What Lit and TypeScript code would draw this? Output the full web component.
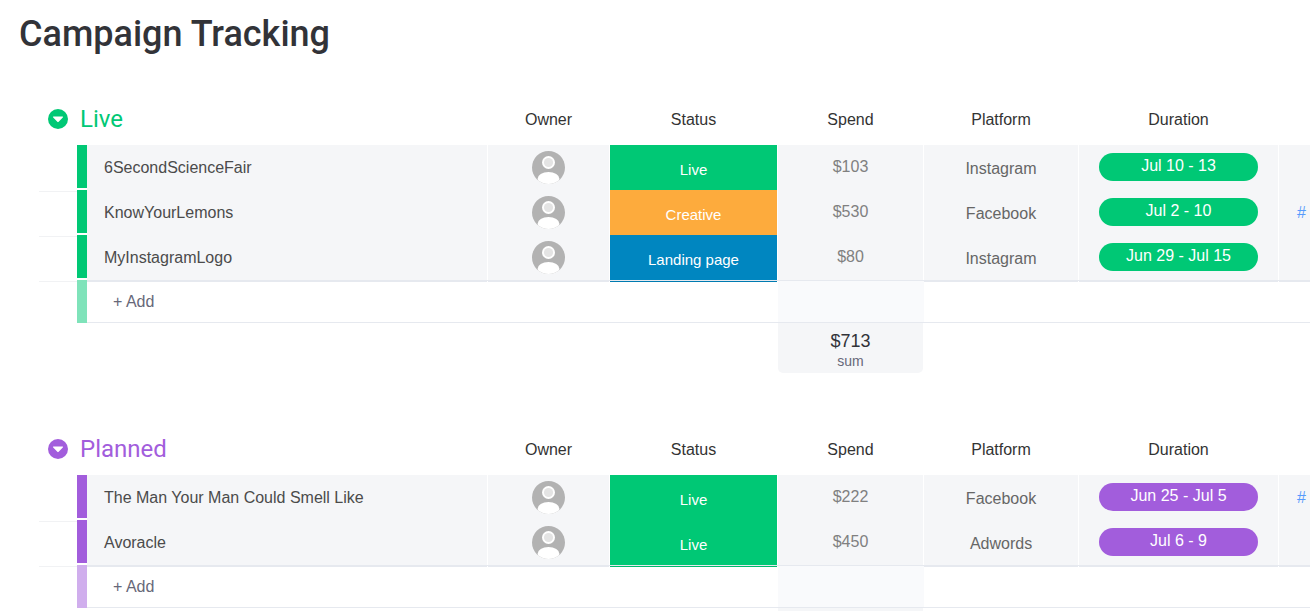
import { LitElement, css, html, svg } from 'lit';
import { customElement } from 'lit/decorators.js';

const GREEN = '#00c875';
const PURPLE = '#a25ddc';

interface Row {
  name: string;
  status: string;
  statusColor: string;
  spend: string;
  platform: string;
  duration: string;
  tag?: boolean;
}

interface Group {
  title: string;
  color: string;
  rows: Row[];
  sum?: string;
}

const groups: Group[] = [
  {
    title: 'Live',
    color: GREEN,
    sum: '$713',
    rows: [
      { name: '6SecondScienceFair', status: 'Live', statusColor: GREEN, spend: '$103', platform: 'Instagram', duration: 'Jul 10 - 13' },
      { name: 'KnowYourLemons', status: 'Creative', statusColor: '#fdab3d', spend: '$530', platform: 'Facebook', duration: 'Jul 2 - 10', tag: true },
      { name: 'MyInstagramLogo', status: 'Landing page', statusColor: '#0086c0', spend: '$80', platform: 'Instagram', duration: 'Jun 29 - Jul 15' },
    ],
  },
  {
    title: 'Planned',
    color: PURPLE,
    rows: [
      { name: 'The Man Your Man Could Smell Like', status: 'Live', statusColor: GREEN, spend: '$222', platform: 'Facebook', duration: 'Jun 25 - Jul 5', tag: true },
      { name: 'Avoracle', status: 'Live', statusColor: GREEN, spend: '$450', platform: 'Adwords', duration: 'Jul 6 - 9' },
    ],
  },
];

const columns = ['Owner', 'Status', 'Spend', 'Platform', 'Duration'];

const avatar = svg`<svg class="avatar" viewBox="0 0 33 33" aria-hidden="true">
  <defs><clipPath id="disc"><circle cx="16.5" cy="16.5" r="16.5"></circle></clipPath></defs>
  <circle cx="16.5" cy="16.5" r="16.5" fill="#b2b2b2"></circle>
  <circle cx="16.5" cy="11.5" r="6.5" fill="#fff"></circle>
  <circle cx="16.5" cy="11.5" r="4.6" fill="#e4e4e4"></circle>
  <ellipse cx="16.5" cy="28" rx="11" ry="7" fill="#fff" clip-path="url(#disc)"></ellipse>
</svg>`;

const chevron = svg`<svg class="chevron" viewBox="0 0 20 20" aria-hidden="true">
  <path d="M5.6 7.6h8.8c.5 0 .8.6.4 1l-4.4 4.4c-.2.2-.6.2-.8 0L5.2 8.6c-.4-.4-.1-1 .4-1z" fill="#fff"></path>
</svg>`;

@customElement('app-root')
export class AppRoot extends LitElement {
  static styles = css`
    :host {
      display: block;
      height: 611px;
      overflow: hidden;
      background: #fff;
      font-family: 'Liberation Sans', Arial, sans-serif;
      font-size: 16px;
    }

    h1 {
      margin: 0;
      padding: 12px 0 0 19px;
      height: 88px;
      box-sizing: border-box;
      font: 500 36px/44px Roboto, sans-serif;
      color: #323338;
    }

    .group {
      margin: 12px 0 57px 39px;
    }

    .group + .group {
      margin-top: 0;
    }

    .grid {
      display: grid;
      grid-template-columns: 448px 121px 167px 145px 154px 199px 1fr;
      column-gap: 1px;
    }

    .head {
      height: 45px;
      padding-bottom: 5px;
      box-sizing: border-box;
      align-items: center;
      text-align: center;
      color: #333;
    }

    .head-title {
      display: flex;
      align-items: center;
      gap: 12px;
      padding-left: 9px;
      font: 24px/30px Roboto, sans-serif;
      text-align: left;
      margin-top: -2px;
    }

    .dot {
      display: flex;
      width: 20px;
      height: 20px;
      border-radius: 50%;
    }

    .chevron {
      width: 20px;
      height: 20px;
    }

    .row {
      height: 44px;
      margin-bottom: 1px;
      color: #666;
    }

    .lead {
      display: flex;
    }

    .stub {
      width: 38px;
      box-sizing: border-box;
      border-bottom: 1px solid #f1f2f4;
    }

    .bar {
      width: 10px;
      height: 43px;
    }

    .name {
      flex: 1;
      padding-left: 17px;
      line-height: 46px;
      color: #4b4b4b;
    }

    .cell {
      box-sizing: border-box;
      display: flex;
      align-items: center;
      justify-content: center;
      background: #f5f6f8;
      border-bottom: 1px solid #e6e9ef;
    }

    .name.cell {
      justify-content: flex-start;
    }

    .avatar {
      width: 33px;
      height: 33px;
      margin-top: -2px;
    }

    .status {
      color: #fff;
      font-size: 15px;
      border-bottom-color: rgba(0, 0, 0, 0.08);
      padding-top: 2px;
    }

    .spend {
      color: #808080;
      padding-bottom: 3px;
    }

    .platform {
      padding-top: 1px;
    }

    .pill {
      width: 159px;
      height: 28px;
      margin-top: -2px;
      border-radius: 14px;
      color: #fff;
      text-align: center;
      line-height: 26px;
    }

    .tag {
      justify-content: flex-start;
      padding-left: 18px;
      color: #579bfc;
    }

    .add {
      display: grid;
      grid-template-columns: 448px 291px 146px 1fr;
      height: 43px;
    }

    .add .bar {
      opacity: 0.5;
    }

    .add-fill {
      box-sizing: border-box;
      border-top: 1px solid #e6e9ef;
      border-bottom: 1px solid #e6e9ef;
    }

    .add-label {
      flex: 1;
      padding-left: 26px;
      line-height: 41px;
      color: #676879;
    }

    .add-spend {
      background: #f9fafc;
    }

    .sum {
      height: 50px;
    }

    .sum-cell {
      grid-column: 4;
      border-radius: 0 0 5px 5px;
      background: #f5f6f8;
      text-align: center;
      padding-top: 7px;
      box-sizing: border-box;
    }

    .sum-value {
      font-size: 18px;
      line-height: 22px;
      color: #323338;
    }

    .sum-label {
      font-size: 14px;
      line-height: 18px;
      color: #676879;
    }
  `;

  renderRow(row: Row, color: string) {
    return html`<div class="grid row">
      <div class="lead">
        <div class="stub"></div>
        <div class="bar" style="background:${color}"></div>
        <div class="name cell">${row.name}</div>
      </div>
      <div class="cell">${avatar}</div>
      <div class="cell status" style="background:${row.statusColor}">${row.status}</div>
      <div class="cell spend">${row.spend}</div>
      <div class="cell platform">${row.platform}</div>
      <div class="cell"><div class="pill" style="background:${color}">${row.duration}</div></div>
      <div class="cell tag">${row.tag ? '#' : ''}</div>
    </div>`;
  }

  renderGroup(group: Group) {
    return html`<section class="group">
      <div class="grid head">
        <div class="head-title" style="color:${group.color}">
          <span class="dot" style="background:${group.color}">${chevron}</span>${group.title}
        </div>
        ${columns.map(c => html`<div>${c}</div>`)}
      </div>
      ${group.rows.map(r => this.renderRow(r, group.color))}
      <div class="add">
        <div class="lead">
          <div class="stub" style="border:0"></div>
          <div class="bar" style="background:${group.color}"></div>
          <div class="add-label add-fill">+ Add</div>
        </div>
        <div class="add-fill"></div>
        <div class="add-fill add-spend"></div>
        <div class="add-fill"></div>
      </div>
      <div class="grid sum">
        <div class="sum-cell">
          ${group.sum
            ? html`<div class="sum-value">${group.sum}</div>
                <div class="sum-label">sum</div>`
            : ''}
        </div>
      </div>
    </section>`;
  }

  render() {
    return html`<h1>Campaign Tracking</h1>
      ${groups.map(g => this.renderGroup(g))}`;
  }
}
